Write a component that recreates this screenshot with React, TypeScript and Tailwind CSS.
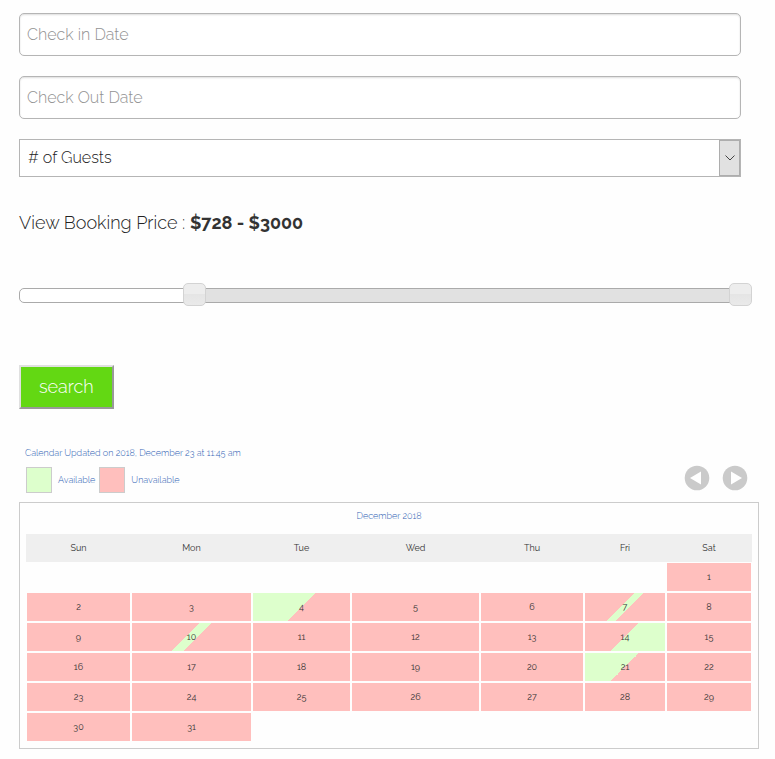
import { useState } from "react";

type DayState = "none" | "booked" | "checkIn" | "checkOut" | "turnover";

const MAX_PRICE = 3000;

const dayStyles: Record<DayState, string> = {
  none: "",
  booked: "bg-[#ffbfbd]",
  checkIn: "bg-[linear-gradient(135deg,#ddffcc_50%,#ffbfbd_50%)]",
  checkOut: "bg-[linear-gradient(135deg,#ffbfbd_50%,#ddffcc_50%)]",
  turnover:
    "bg-[linear-gradient(135deg,#ffbfbd_46%,#ddffcc_46%,#ddffcc_54%,#ffbfbd_54%)]",
};

const specialDays: Record<number, DayState> = {
  4: "checkIn",
  7: "turnover",
  10: "turnover",
  14: "checkOut",
  21: "checkIn",
};

const weekdays = [
  { name: "Sun", width: "w-[105px]" },
  { name: "Mon", width: "w-[121px]" },
  { name: "Tue", width: "w-[99px]" },
  { name: "Wed", width: "w-[129px]" },
  { name: "Thu", width: "w-[104px]" },
  { name: "Fri", width: "w-[82px]" },
  { name: "Sat", width: "w-[86px]" },
];

// December 2018 starts on a Saturday.
const weeks = Array.from({ length: 6 }, (_, week) =>
  Array.from({ length: 7 }, (_, day) => {
    const date = week * 7 + day - 5;
    return date >= 1 && date <= 31 ? date : null;
  }),
);

const fieldClass =
  "h-[43px] w-full rounded-[5px] border border-[#b5b5b5] bg-white px-[7px] text-base text-[#333] shadow-[inset_0_1px_2px_#ddd] outline-none placeholder:text-[#929292]";

const rangeClass =
  "pointer-events-none absolute -inset-x-[11px] -top-[6px] h-6 appearance-none bg-transparent outline-none [&::-webkit-slider-thumb]:pointer-events-auto [&::-webkit-slider-thumb]:h-[23px] [&::-webkit-slider-thumb]:w-[23px] [&::-webkit-slider-thumb]:appearance-none [&::-webkit-slider-thumb]:rounded-[5px] [&::-webkit-slider-thumb]:border [&::-webkit-slider-thumb]:border-[#d3d3d3] [&::-webkit-slider-thumb]:bg-[linear-gradient(#ededed_50%,#e5e5e5_50%,#eaeaea)]";

function PriceSlider({
  low,
  high,
  onLow,
  onHigh,
}: {
  low: number;
  high: number;
  onLow: (value: number) => void;
  onHigh: (value: number) => void;
}) {
  return (
    <div className="relative mt-[53px] h-[15px]">
      <div className="h-full overflow-hidden rounded-[5px] border border-[#aaa] bg-white">
        <div
          className="h-full bg-[#e1e1e1]"
          style={{
            marginLeft: `${(low / MAX_PRICE) * 100}%`,
            width: `${((high - low) / MAX_PRICE) * 100}%`,
          }}
        />
      </div>
      <input
        type="range"
        aria-label="Minimum price"
        min={0}
        max={MAX_PRICE}
        value={low}
        onChange={(e) => onLow(Math.min(Number(e.target.value), high))}
        className={rangeClass}
      />
      <input
        type="range"
        aria-label="Maximum price"
        min={0}
        max={MAX_PRICE}
        value={high}
        onChange={(e) => onHigh(Math.max(Number(e.target.value), low))}
        className={rangeClass}
      />
    </div>
  );
}

function SearchForm() {
  const [low, setLow] = useState(728);
  const [high, setHigh] = useState(3000);

  return (
    <form className="pr-[18px]" onSubmit={(e) => e.preventDefault()}>
      <div className="flex flex-col gap-5">
        <input type="text" aria-label="Check in Date" placeholder="Check in Date" className={fieldClass} />
        <input type="text" aria-label="Check Out Date" placeholder="Check Out Date" className={fieldClass} />
        <div className="relative">
          <select
            aria-label="# of Guests"
            className="block h-[38px] w-full appearance-none border border-[#b5b5b5] bg-white px-2 text-base text-[#222] outline-none"
          >
            <option># of Guests</option>
            <option>1</option>
            <option>2</option>
            <option>3</option>
            <option>4</option>
          </select>
          <span className="pointer-events-none absolute inset-y-px right-px flex w-[21px] items-center justify-center border border-[#adadad] bg-[#e1e1e1]">
            <svg width="10" height="6" viewBox="0 0 10 6" fill="none" stroke="#444" aria-hidden="true">
              <path d="M0.5 0.5 5 5 9.5 0.5" />
            </svg>
          </span>
        </div>
      </div>
      <p className="mt-[34px] text-lg leading-6 text-[#222]">
        View Booking Price :{" "}
        <strong className="font-bold text-[#333]">
          ${low} - ${high}
        </strong>
      </p>
      <PriceSlider low={low} high={high} onLow={setLow} onHigh={setHigh} />
      <button
        type="submit"
        className="mt-[62px] block h-11 border-2 border-t-[#e0e0e0] border-r-[#999] border-b-[#999] border-l-[#e0e0e0] bg-[#63d813] px-[18px] text-lg leading-6 text-white"
      >
        search
      </button>
    </form>
  );
}

function ArrowButton({ label, points }: { label: string; points: string }) {
  return (
    <button type="button" aria-label={label} className="block">
      <svg width="26" height="26" viewBox="0 0 26 26" aria-hidden="true">
        <circle cx="13" cy="13" r="12.3" fill="#cacaca" />
        <polygon points={points} fill="#fff" />
      </svg>
    </button>
  );
}

function Calendar() {
  return (
    <section className="mt-9 text-[9px] leading-4 text-[#2f62b4]">
      <p className="pl-1.5">Calendar Updated on 2018, December 23 at 11:45 am</p>
      <div className="mt-1 flex items-start justify-between pr-[11px] pl-[7px]">
        <div className="mt-0.5 flex items-center">
          <span className="mr-1.5 h-[26px] w-[26px] border border-[#ccc] bg-[#ddffcc]" />
          <span>Available</span>
          <span className="mr-1.5 ml-1 h-[26px] w-[26px] border border-[#ccc] bg-[#ffbfbd]" />
          <span>Unavailable</span>
        </div>
        <div className="flex gap-3">
          <ArrowButton label="Previous month" points="6,13 17,6.5 17,19.5" />
          <ArrowButton label="Next month" points="20,13 9,6.5 9,19.5" />
        </div>
      </div>
      <div className="mt-[9px] border border-[#ccc] px-1.5 pt-[5px] pb-1.5">
        <table className="w-full table-fixed border-separate border-spacing-0 text-center font-normal text-[#333]">
          <caption className="pb-2.5 font-light text-[#2f62b4]">December 2018</caption>
          <thead>
            <tr className="h-7 bg-[#efefef]">
              {weekdays.map((day) => (
                <th key={day.name} scope="col" className={`${day.width} p-0 font-normal`}>
                  {day.name}
                </th>
              ))}
            </tr>
          </thead>
          <tbody>
            {weeks.map((week, i) => (
              <tr key={i} className="h-[30px]">
                {week.map((date, j) => (
                  <td
                    key={j}
                    className={`border border-[#fefefe] bg-clip-padding p-0 ${
                      dayStyles[date === null ? "none" : (specialDays[date] ?? "booked")]
                    }`}
                  >
                    {date}
                  </td>
                ))}
              </tr>
            ))}
          </tbody>
        </table>
      </div>
    </section>
  );
}

export default function App() {
  return (
    <main className="bg-[#fefefe] pt-[13px] pr-4 pb-2.5 pl-[19px] font-['Raleway','Open_Sans',sans-serif] font-light oldstyle-nums">
      <SearchForm />
      <Calendar />
    </main>
  );
}
